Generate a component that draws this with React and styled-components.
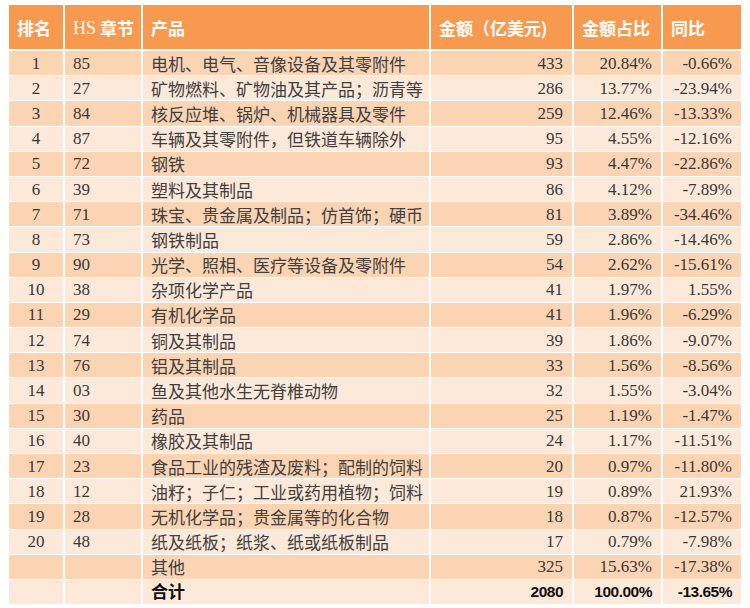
import styled, { createGlobalStyle } from "styled-components";

const GlobalStyle = createGlobalStyle`
  body {
    margin: 0;
    background: #ffffff;
    font-family: "Liberation Serif", "Noto Sans CJK SC", serif;
  }
`;

const Page = styled.div`
  width: 750px;
  height: 608px;
  padding: 5px 9px;
  box-sizing: border-box;
`;

const Table = styled.div`
  width: 732px;
  display: flex;
  flex-direction: column;
  gap: 1px;
  background: #ffffff;
`;

const Row = styled.div`
  display: grid;
  grid-template-columns: 54px 76px 286px 141px 87px 78px;
  column-gap: 2px;
  height: ${(p) => (p.$head ? "44px" : "24.2px")};
  margin-bottom: ${(p) => (p.$head ? "1px" : "0")};
`;

const Cell = styled.div`
  display: flex;
  align-items: center;
  justify-content: ${(p) =>
    p.$align === "right" ? "flex-end" : p.$align === "center" ? "center" : "flex-start"};
  padding: 0 9px 0 ${(p) => (p.$align === "center" ? "9px" : "8px")};
  background: ${(p) => (p.$dark ? "#fbd4b4" : "#fde9da")};
  color: #383838;
  font-size: 17px;
  line-height: 1;
  white-space: nowrap;
  overflow: hidden;
`;

const HeadCell = styled(Cell)`
  background: #f79a4f;
  color: #ffffff;
  font-family: "Noto Sans CJK SC", sans-serif;
  font-weight: 700;
  padding-left: 8px;
  padding-top: 1px;
`;

const Latin = styled.span`
  font-family: "Liberation Serif", serif;
  font-weight: 400;
  font-size: 18px;
  margin-right: 4px;
`;

const Label = styled.span`
  font-family: "Noto Sans CJK SC", sans-serif;
  color: #404040;
`;

const TotalText = styled.span`
  font-family: "Liberation Sans", "Noto Sans CJK SC", sans-serif;
  font-weight: 700;
  font-size: ${(p) => (p.$big ? "17px" : "15.5px")};
  letter-spacing: ${(p) => (p.$big ? "0" : "-0.5px")};
  color: #111111;
`;

const rows = [
  ["1", "85", "电机、电气、音像设备及其零附件", "433", "20.84%", "-0.66%"],
  ["2", "27", "矿物燃料、矿物油及其产品；沥青等", "286", "13.77%", "-23.94%"],
  ["3", "84", "核反应堆、锅炉、机械器具及零件", "259", "12.46%", "-13.33%"],
  ["4", "87", "车辆及其零附件，但铁道车辆除外", "95", "4.55%", "-12.16%"],
  ["5", "72", "钢铁", "93", "4.47%", "-22.86%"],
  ["6", "39", "塑料及其制品", "86", "4.12%", "-7.89%"],
  ["7", "71", "珠宝、贵金属及制品；仿首饰；硬币", "81", "3.89%", "-34.46%"],
  ["8", "73", "钢铁制品", "59", "2.86%", "-14.46%"],
  ["9", "90", "光学、照相、医疗等设备及零附件", "54", "2.62%", "-15.61%"],
  ["10", "38", "杂项化学产品", "41", "1.97%", "1.55%"],
  ["11", "29", "有机化学品", "41", "1.96%", "-6.29%"],
  ["12", "74", "铜及其制品", "39", "1.86%", "-9.07%"],
  ["13", "76", "铝及其制品", "33", "1.56%", "-8.56%"],
  ["14", "03", "鱼及其他水生无脊椎动物", "32", "1.55%", "-3.04%"],
  ["15", "30", "药品", "25", "1.19%", "-1.47%"],
  ["16", "40", "橡胶及其制品", "24", "1.17%", "-11.51%"],
  ["17", "23", "食品工业的残渣及废料；配制的饲料", "20", "0.97%", "-11.80%"],
  ["18", "12", "油籽；子仁；工业或药用植物；饲料", "19", "0.89%", "21.93%"],
  ["19", "28", "无机化学品；贵金属等的化合物", "18", "0.87%", "-12.57%"],
  ["20", "48", "纸及纸板；纸浆、纸或纸板制品", "17", "0.79%", "-7.98%"],
  ["", "", "其他", "325", "15.63%", "-17.38%"],
];

const DataRow = ({ cells, dark }) => (
  <Row>
    <Cell $dark={dark} $align="center">{cells[0]}</Cell>
    <Cell $dark={dark}>{cells[1]}</Cell>
    <Cell $dark={dark}>
      <Label>{cells[2]}</Label>
    </Cell>
    <Cell $dark={dark} $align="right">{cells[3]}</Cell>
    <Cell $dark={dark} $align="right">{cells[4]}</Cell>
    <Cell $dark={dark} $align="right">{cells[5]}</Cell>
  </Row>
);

export default function App() {
  return (
    <Page>
      <GlobalStyle />
      <Table>
        <Row $head>
          <HeadCell>排名</HeadCell>
          <HeadCell>
            <Latin>HS</Latin>章节
          </HeadCell>
          <HeadCell>产品</HeadCell>
          <HeadCell>金额（亿美元)</HeadCell>
          <HeadCell>金额占比</HeadCell>
          <HeadCell>同比</HeadCell>
        </Row>
        {rows.map((r, i) => (
          <DataRow key={i} cells={r} dark={i % 2 === 0} />
        ))}
        <Row>
          <Cell />
          <Cell />
          <Cell>
            <TotalText $big>合计</TotalText>
          </Cell>
          <Cell $align="right">
            <TotalText>2080</TotalText>
          </Cell>
          <Cell $align="right">
            <TotalText>100.00%</TotalText>
          </Cell>
          <Cell $align="right">
            <TotalText>-13.65%</TotalText>
          </Cell>
        </Row>
      </Table>
    </Page>
  );
}
